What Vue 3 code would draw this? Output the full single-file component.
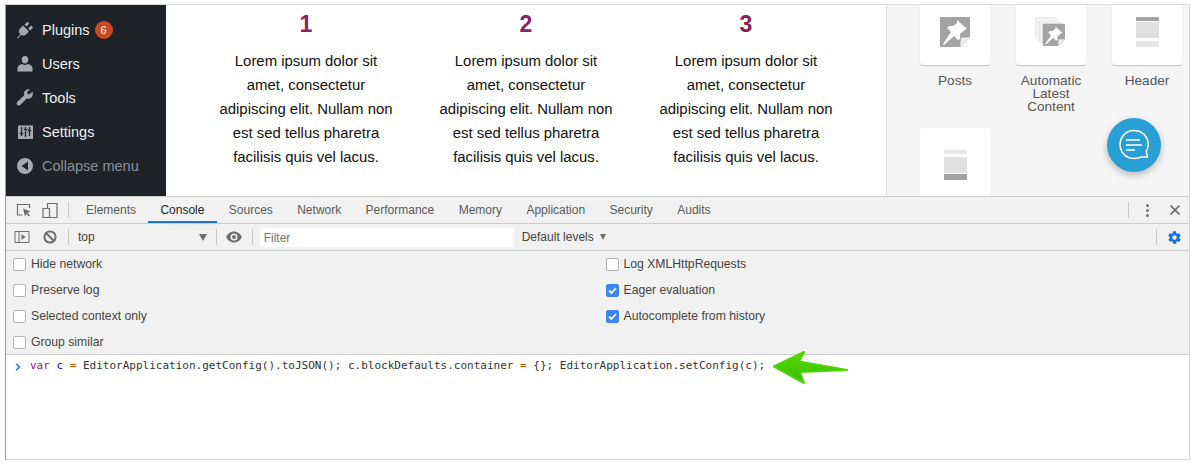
<script setup>
const menu = [
  { label: 'Plugins', icon: 'plug', badge: '6' },
  { label: 'Users', icon: 'user' },
  { label: 'Tools', icon: 'tool' },
  { label: 'Settings', icon: 'set' },
  { label: 'Collapse menu', icon: 'col', dim: true },
]
const cols = ['1', '2', '3']
const tabs = ['Elements', 'Console', 'Sources', 'Network', 'Performance', 'Memory', 'Application', 'Security', 'Audits']
const left = [
  { t: 'Hide network' }, { t: 'Preserve log' }, { t: 'Selected context only' }, { t: 'Group similar' },
]
const right = [
  { t: 'Log XMLHttpRequests' }, { t: 'Eager evaluation', on: true }, { t: 'Autocomplete from history', on: true },
]
</script>

<template>
  <div class="frame">
    <div class="page">
      <aside class="side">
        <div v-for="m in menu" :key="m.label" class="item" :class="{ dim: m.dim }">
          <svg class="mi" width="18" height="18" viewBox="0 0 18 18">
            <path v-if="m.icon === 'plug'" fill="currentColor" d="M1 17l3.200-3.800-.9-1.400c-.8-1.700-.2-3.400 1.300-4.800l2.400-2.500 6 6-2.400 2.400c-1.400 1.400-3.100 2.100-4.700 1.400l-1.100-.6L2.300 17.300zM8.600 3.600l2.700-2.800 2 1.800-2.800 2.900zM12.200 7.400l3-2.800 1.900 1.900-2.900 2.900z"/>
            <path v-else-if="m.icon === 'user'" fill="currentColor" d="M9 1c2 0 3.300 1.500 3.300 3.500S11 8.500 9 8.500 5.700 6.500 5.700 4.500 7 1 9 1zM6.500 9C7.300 9.700 8 10 9 10s1.700-.3 2.500-1c2.700.4 4.800 1.700 5 4v3.500h-15V13c.2-2.300 2.300-3.600 5-4z"/>
            <path v-else-if="m.icon === 'tool'" fill="currentColor" d="M16.500 2.500l-3 3-2-.5-.5-2 3-2.500c-2-.6-4 0-5 1.300-1 1.200-1.200 3-.7 4.500L1.200 13c-.8.800-.8 2.200 0 3s2.200.8 3 0l6.500-6.600c1.500.5 3.300.2 4.700-1 1.300-1.200 1.700-3.800 1.100-5.900z"/>
            <g v-else-if="m.icon === 'set'">
              <rect x="2" y="2.500" width="15" height="13.500" fill="currentColor"/>
              <path fill="none" stroke="#1f2327" stroke-width="1.300" d="M5.500 4v9M3.700 10.500h3.600M9.500 8v6M7.800 6.500h3.400M9.500 4v1.500M13.500 4v9M11.800 7.500h3.400"/>
            </g>
            <path v-else fill="currentColor" fill-rule="evenodd" d="M9 1a8 8 0 1 1 0 16A8 8 0 0 1 9 1zm3 3.500L5.500 9l6.500 4.500z"/>
          </svg>
          <span>{{ m.label }}</span>
          <b v-if="m.badge" class="badge">{{ m.badge }}</b>
        </div>
      </aside>
      <main class="content">
        <section v-for="c in cols" :key="c" class="col">
          <h2>{{ c }}</h2>
          <p>Lorem ipsum dolor sit amet, consectetur adipiscing elit. Nullam non est sed tellus pharetra facilisis quis vel lacus.</p>
        </section>
      </main>
      <aside class="blocks">
        <div class="block">
          <div class="tile">
            <svg width="30" height="30" viewBox="0 0 30 30">
              <path fill="#a3a3a3" d="M0 0h30v20L20 30H0z"/>
              <path fill="#fff" d="M17 3l10 9-3 1.500-4 3.500v5l-2 1-4-4-10 9-1-1 8-12-4-4 2-2h4l4-3z"/>
              <path fill="#efefef" stroke="#c8c8c8" stroke-width=".6" d="M20 30l1-9 9-1z"/>
            </svg>
          </div>
          <span>Posts</span>
        </div>
        <div class="block">
          <div class="tile">
            <svg width="32" height="30" viewBox="0 0 32 30">
              <rect x="0" y="0" width="22" height="22" fill="#ececec"/>
              <rect x="3" y="3" width="22" height="22" fill="#e2e2e2" stroke="#fff"/>
              <rect x="6" y="5" width="22" height="22" fill="#dadada" stroke="#fff"/>
              <path fill="#a3a3a3" d="M8 7h22v15l-7 7H8z"/>
              <path fill="#fff" d="M20.500 9.500l7 6.500-2.200 1-2.800 2.500v3.500l-1.500.7-2.800-2.800-7.200 6.500-.7-.7 5.700-8.500-2.800-2.800 1.500-1.500h2.800l2.800-2.100z"/>
              <path fill="#efefef" stroke="#c8c8c8" stroke-width=".5" d="M23 29l.7-6.500 6.300-.5z"/>
            </svg>
          </div>
          <span>Automatic Latest Content</span>
        </div>
        <div class="block">
          <div class="tile">
            <div class="lay">
              <i class="h4 dark"></i><i class="mid"></i><i class="h6 light"></i>
            </div>
          </div>
          <span>Header</span>
        </div>
        <div class="block">
          <div class="tile footer">
            <div class="lay">
              <i class="h4 light"></i><i class="mid2"></i><i class="h6 dark"></i>
            </div>
          </div>
        </div>
        <div class="fab">
          <svg width="32" height="32" viewBox="0 0 32 32" fill="none" stroke="#fff" stroke-width="1.500">
            <path d="M16 1.500a14 14 0 1 0 0 28c3 0 5-.8 7-1.500h6.500l-1.200-5.500A14 14 0 0 0 16 1.500z"/>
            <path d="M8 11h14M8 16h16M8 21h9" stroke-width="1.700"/>
          </svg>
        </div>
      </aside>
    </div>

    <div class="tabs">
      <svg class="ic" style="margin-left:10px" width="16" height="16" viewBox="0 0 16 16">
        <path fill="none" stroke="#6e6e6e" stroke-width="1.200" d="M6 13H1.500V2.500h12V6"/>
        <path fill="#6e6e6e" d="M7 6.500l7.500 3-3 1.300 2.500 2.700-1.200 1-2.500-2.700-1.300 2.800z"/>
      </svg>
      <svg class="ic" style="margin-left:10px" width="16" height="16" viewBox="0 0 16 16">
        <path fill="none" stroke="#6e6e6e" stroke-width="1.200" d="M5.500 6V1.500h9.500v14H5.500M1 6.500h6.500v9H1z"/>
      </svg>
      <i class="sep" style="margin:0 4.800px 0 10px"></i>
      <span v-for="t in tabs" :key="t" class="tab" :class="{ active: t === 'Console' }">{{ t }}</span>
      <i class="grow"></i>
      <i class="sep"></i>
      <span class="dots"><i></i><i></i><i></i></span>
      <svg class="close" width="10" height="10" viewBox="0 0 10 10"><path stroke="#6e6e6e" stroke-width="1.600" d="M.5.500l9 9M9.500.500l-9 9"/></svg>
    </div>

    <div class="bar">
      <svg class="ic" style="margin-left:8px" width="16" height="14" viewBox="0 0 16 14">
        <path fill="none" stroke="#6e6e6e" d="M1 1.500h14v11H1zM5 1.500v11"/>
        <path fill="#6e6e6e" d="M7.500 4l4 3-4 3z"/>
      </svg>
      <svg class="ic" style="margin-left:13px" width="14" height="14" viewBox="0 0 14 14" fill="none" stroke="#6e6e6e" stroke-width="2">
        <circle cx="7" cy="7" r="5.600"/><path d="M3 3l8 8"/>
      </svg>
      <i class="sep" style="margin:0 9px 0 11px"></i>
      <span class="top">top</span>
      <i class="tri" style="margin-left:104px"></i>
      <i class="sep" style="margin:0 9px 0 9px"></i>
      <svg class="ic" width="16" height="12" viewBox="0 0 16 12">
        <path fill="#6e6e6e" fill-rule="evenodd" d="M8 .5c3.500 0 6.400 2.300 7.800 5.500C14.400 9.200 11.500 11.500 8 11.500S1.600 9.200.2 6C1.600 2.800 4.500.5 8 .5zM8 2.500a3.500 3.500 0 1 0 0 7 3.500 3.500 0 0 0 0-7zM8 4a2 2 0 1 1 0 4 2 2 0 0 1 0-4z"/>
      </svg>
      <i class="sep" style="margin:0 7px 0 10px"></i>
      <span class="filter">Filter</span>
      <span class="levels">Default levels</span>
      <i class="tri small" style="margin-left:6px"></i>
      <i class="grow"></i>
      <i class="sep"></i>
      <svg class="gear" width="15" height="15" viewBox="0 0 24 24">
        <path fill="#1a6fe8" d="M19.400 13c.1-.3.100-.7.100-1s0-.7-.1-1l2.100-1.600c.2-.2.200-.4.100-.6l-2-3.500c-.1-.2-.4-.3-.6-.2l-2.500 1c-.5-.4-1.100-.7-1.700-1l-.4-2.600c0-.3-.2-.4-.5-.4h-4c-.3 0-.5.100-.5.400l-.4 2.600c-.6.300-1.200.6-1.700 1l-2.500-1c-.2-.1-.5 0-.6.200l-2 3.500c-.1.200-.1.400.1.600L4.600 11c-.1.300-.1.700-.1 1s0 .7.100 1l-2.100 1.600c-.2.200-.2.400-.1.600l2 3.500c.1.200.4.300.6.200l2.500-1c.5.400 1.100.7 1.700 1l.4 2.600c0 .3.200.4.500.4h4c.3 0 .5-.1.500-.4l.4-2.600c.6-.3 1.200-.6 1.700-1l2.500 1c.2.100.5 0 .6-.2l2-3.500c.1-.2.1-.4-.1-.6zM12 15.500a3.500 3.500 0 1 1 0-7 3.500 3.500 0 0 1 0 7z"/>
      </svg>
    </div>

    <div class="opts">
      <div class="optcol">
        <label v-for="o in left" :key="o.t" class="opt"><i class="box"></i>{{ o.t }}</label>
      </div>
      <div class="optcol">
        <label v-for="o in right" :key="o.t" class="opt">
          <i class="box" :class="{ on: o.on }">
            <svg v-if="o.on" width="11" height="11" viewBox="0 0 11 11"><path fill="none" stroke="#fff" stroke-width="1.800" d="M2 5.500l2.500 2.500L9 3"/></svg>
          </i>{{ o.t }}
        </label>
      </div>
    </div>

    <div class="console">
      <svg class="prompt" width="6" height="8" viewBox="0 0 6 8"><path fill="none" stroke="#2a6fe0" stroke-width="1.500" d="M1 .8L4.500 4 1 7.200"/></svg>
      <code><span class="kw">var</span> <span class="v">c</span> <span class="op">=</span> EditorApplication.getConfig().toJSON(); c.blockDefaults.container <span class="op">=</span> {}; EditorApplication.setConfig(c);</code>
      <svg class="arrow" width="78" height="36" viewBox="0 0 78 36">
        <defs>
          <linearGradient id="g" x1="0" y1="0" x2="0" y2="1">
            <stop offset="0" stop-color="#58e000"/><stop offset="1" stop-color="#34b800"/>
          </linearGradient>
        </defs>
        <path fill="url(#g)" stroke="#4fd400" stroke-width="2" stroke-linejoin="round" d="M2 16.500L32 2l-5 9.500L75 20 28 22l4 11z"/>
      </svg>
    </div>
  </div>
</template>

<style scoped>
.frame {
  box-sizing: border-box;
  width: 1185px;
  height: 456px;
  margin: 4px 0 0 5px;
  border: 1px solid #d2d2d2;
  border-left-color: #9a9a9a;
  border-top-color: #dcdcdc;
  background: #fff;
  display: flex;
  flex-direction: column;
  font-family: "Liberation Sans", Arial, sans-serif;
  overflow: hidden;
}
.page { height: 191px; display: flex; }
.side { width: 160px; background: #1f2327; padding-top: 8px; box-sizing: border-box; flex: none; }
.item {
  height: 34px; display: flex; align-items: center; color: #eeeff0; font-size: 14.500px;
  padding-left: 10px; box-sizing: border-box;
}
.item.dim { color: #8c8f94; }
.item .mi { color: #a7aaad; margin-right: 8px; flex: none; }
.badge {
  width: 18px; height: 18px; border-radius: 50%; background: #ca4a1f; color: #fff; font-size: 11px;
  font-weight: 400; display: flex; align-items: center; justify-content: center; margin-left: 5px;
}
.content { width: 720px; flex: none; display: flex; padding-left: 51px; box-sizing: border-box; gap: 42px; }
.col { width: 178px; flex: none; text-align: center; }
.col h2 { margin: 6px 0 0; font-size: 23px; line-height: 27px; color: #86235f; font-weight: 700; }
.col p { margin: 11px 0 0; font-size: 14.900px; line-height: 24px; color: #111; }
.blocks {
  position: relative; flex: 1; background: #f5f5f5; border-left: 1px solid #dcdcdc;
  display: grid; grid-template-columns: repeat(3, 70px); column-gap: 26px; align-content: start;
  padding-left: 33px; box-sizing: border-box; height: 191px; overflow: hidden; row-gap: 15px;
}
.block { width: 70px; text-align: center; color: #555; font-size: 13.600px; line-height: 13px; }
.block span { display: block; margin: 9px -6px 0; }
.tile {
  width: 70px; height: 60px; box-sizing: border-box; padding-bottom: 6px; background: #fff; border-radius: 0 0 3px 3px;
  box-shadow: 0 1px 1px #c4c4c4; display: flex; align-items: center; justify-content: center;
}
.tile.footer { height: 70px; border-radius: 3px 3px 0 0; box-shadow: none; align-items: flex-start; padding-bottom: 0; }
.footer .lay { margin-top: 22px; }
.lay { width: 23px; display: flex; flex-direction: column; flex: none; }
.lay i { display: block; }
.h4 { height: 4px; }
.h6 { height: 6px; }
.dark { background: #a3a3a3; }
.light { background: #e6e6e6; }
.mid { height: 16px; margin: 1px 0 3px; background: #e0e0e0; }
.mid2 { height: 16px; margin: 3px 0 1px; background: #e0e0e0; }
.fab {
  position: absolute; left: 220px; top: 113px; width: 54px; height: 54px; border-radius: 50%;
  background: #2a9fd6; box-shadow: 0 3px 7px rgba(0, 0, 0, .25);
  display: flex; align-items: center; justify-content: center;
}
.tabs, .bar {
  height: 27px; box-sizing: border-box; background: #f1f1f1; display: flex; align-items: center; flex: none;
  border-top: 1px solid #cdcdcd; font-size: 12px; color: #5a5a5a;
}
.ic { flex: none; }
.sep { width: 1px; height: 16px; background: #c8c8c8; flex: none; display: block; }
.grow { flex: 1; }
.tab {
  height: 26px; line-height: 27px; padding: 0 12.200px; position: relative; box-sizing: border-box;
}
.tab.active { color: #222; }
.tab.active::after { content: ""; position: absolute; left: 0; right: 0; bottom: 0; height: 2px; background: #1a73e8; }
.dots { display: flex; flex-direction: column; gap: 2px; margin: 0 21px 0 17px; }
.dots i { width: 3px; height: 3px; border-radius: 50%; background: #6e6e6e; display: block; }
.close { margin-right: 9px; }
.top { color: #444; }
.tri { border-left: 4px solid transparent; border-right: 4px solid transparent; border-top: 7px solid #6e6e6e; display: block; flex: none; }
.tri.small { border-left-width: 3.500px; border-right-width: 3.500px; border-top-width: 6px; }
.filter {
  width: 254px; height: 19px; background: #fff; line-height: 20px; padding-left: 4px; box-sizing: border-box; color: #757575; flex: none;
}
.levels { margin-left: 8px; color: #444; }
.gear { margin: 0 7px 0 10px; flex: none; }
.opts {
  height: 105px; box-sizing: border-box; border-top: 1px solid #cdcdcd; border-bottom: 1px solid #cdcdcd;
  background: #f1f1f1; display: flex; font-size: 12.200px; color: #444; flex: none;
}
.optcol { width: 594px; padding: 0 0 0 7px; box-sizing: border-box; }
.optcol + .optcol { padding-left: 8px; }
.opt { height: 26px; display: flex; align-items: center; }
.box {
  width: 11px; height: 11px; border: 1px solid #b4b4b4; border-radius: 2px; background: #fff; margin-right: 5px;
  display: flex; align-items: center; justify-content: center; flex: none;
}
.box.on { background: #3b86f0; border-color: #3b86f0; }
.console { position: relative; flex: 1; display: flex; align-items: flex-start; padding-top: 4px; background: #fff; }
.prompt { margin: 4px 0 0 9px; flex: none; }
code {
  margin-left: 9px; font-family: "DejaVu Sans Mono", monospace; font-size: 11px; line-height: 14px; color: #333; white-space: pre;
}
.kw { color: #aa0d91; }
.v { color: #1c00cf; }
.op { color: #c45a00; }
.arrow { position: absolute; left: 766px; top: -5px; }
</style>

<style>
html, body { margin: 0; background: #fff; }
</style>
